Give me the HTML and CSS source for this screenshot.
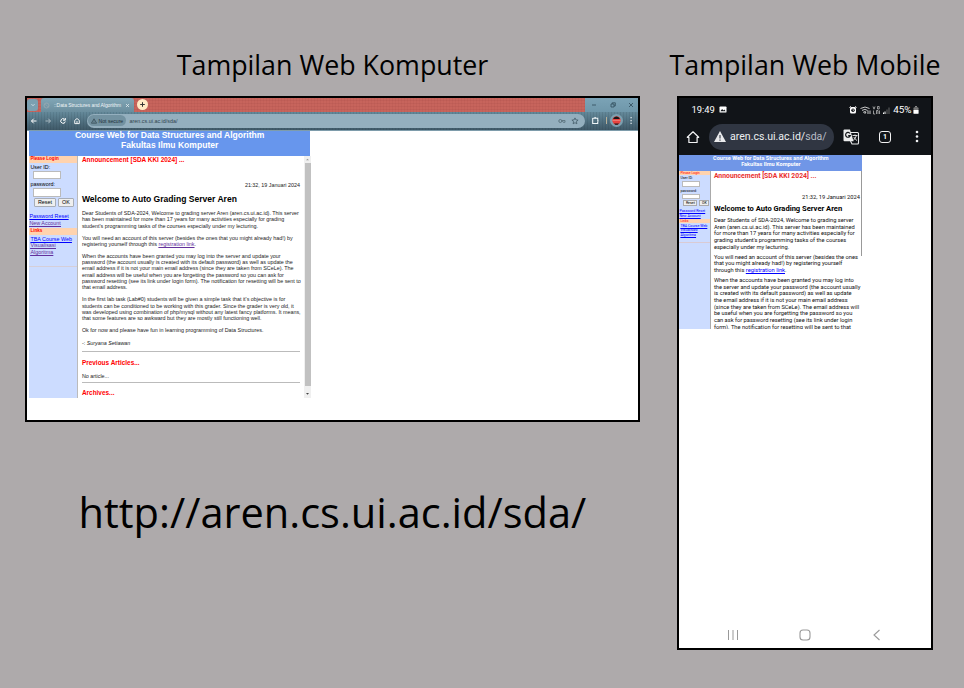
FILE: index.html
```html
<!DOCTYPE html>
<html lang="id">
<head>
<meta charset="utf-8">
<title>Tampilan Web</title>
<link rel="stylesheet" href="styles.css">
</head>
<body>
<main class="board">
  <section class="left">
    <h1 class="caption">Tampilan Web Komputer</h1>
    <div class="desktop">
      <div class="tabs">
        <span class="tab-search"><svg width="8" height="8" viewBox="0 0 8 8"><path d="M2.500 3.200 4 4.700 5.500 3.200" fill="none" stroke="#e6eef2" stroke-width=".8"/></svg></span>
        <div class="tab">
          <svg width="7" height="7" viewBox="0 0 7 7"><circle cx="3.500" cy="3.500" r="2.500" fill="none" stroke="#9aa9b1" stroke-width=".8"/><path d="M1 3q2-1 2.500.5T6 4" fill="none" stroke="#9aa9b1" stroke-width=".6"/></svg>
          <span class="tab-title">::Data Structures and Algorithm</span>
          <svg width="5" height="5" viewBox="0 0 5 5"><path d="m1 1 3 3M4 1 1 4" stroke="#e2ebef" stroke-width=".8"/></svg>
        </div>
        <span class="new-tab"><svg width="7" height="7" viewBox="0 0 7 7"><path d="M3.500 1.200v4.600M1.200 3.500h4.600" stroke="#333" stroke-width="1"/></svg></span>
        <div class="win">
          <svg width="8" height="8" viewBox="0 0 8 8"><path d="M2 4h4" stroke="#304b5b" stroke-width=".8"/></svg>
          <svg width="8" height="8" viewBox="0 0 8 8"><path d="M2 3h3v3H2zM3.200 3V1.800h3.100v3.100H5" fill="none" stroke="#304b5b" stroke-width=".8"/></svg>
          <svg width="8" height="8" viewBox="0 0 8 8"><path d="m2 2 4 4M6 2 2 6" stroke="#304b5b" stroke-width=".8"/></svg>
        </div>
      </div>
      <div class="toolbar">
        <svg class="nav" viewBox="0 0 8 8"><path d="M6.500 4h-5M3.700 1.700 1.500 4l2.200 2.300" fill="none" stroke="#fff" stroke-width="1"/></svg>
        <svg class="nav dim" viewBox="0 0 8 8"><path d="M1.500 4h5M4.300 1.700 6.500 4 4.300 6.300" fill="none" stroke="#fff" stroke-width="1"/></svg>
        <svg class="nav" viewBox="0 0 8 8"><path d="M6.300 4.500A2.300 2.300 0 1 1 5.600 2.300M6.300 1v2.200H4" fill="none" stroke="#fff" stroke-width="1"/></svg>
        <svg class="nav" viewBox="0 0 8 8"><path d="M1.700 3.400 4 1.500l2.300 1.900v3.200H1.700zM4 4v2.500" fill="none" stroke="#fff" stroke-width=".9"/></svg>
        <div class="omnibox">
          <span class="chip"><svg width="6" height="6" viewBox="0 0 6 6"><path d="M3 .8 5.600 5.200H.4zM3 2.400v1.200M3 4.100v.5" fill="none" stroke="#263840" stroke-width=".6"/></svg>Not secure</span>
          <span class="addr">aren.cs.ui.ac.id/sda/</span>
          <svg class="key" width="8" height="6" viewBox="0 0 8 6"><circle cx="2.300" cy="3" r="1.500" fill="none" stroke="#5c747f" stroke-width="1"/><path d="M4 2.500h3v1.800H5.200z" fill="none" stroke="#5c747f" stroke-width=".9"/></svg>
          <svg width="8" height="8" viewBox="0 0 8 8"><path d="m4 .9.9 2 2.200.2-1.700 1.500.5 2.200L4 5.700 2.100 6.800l.5-2.200L.9 3.100l2.200-.2z" fill="none" stroke="#445c68" stroke-width=".8"/></svg>
        </div>
        <svg class="ext" width="9" height="9" viewBox="0 0 9 9"><path d="M1.700 2.200h5v1.500M1.700 2v5.500h5V6" fill="none" stroke="#eef4f6" stroke-width="1.100"/><path d="M6.200 3.800v2h1.300v-2z" fill="#eef4f6"/><path d="M3.300 1.200h1.800v1H3.300z" fill="#eef4f6"/></svg>
        <span class="bar"></span>
        <span class="avatar"><svg width="9" height="9" viewBox="0 0 9 9"><circle cx="4.500" cy="4.500" r="4.200" fill="#e8433f"/><path d="M1.200 2.200Q4.500-1 7.800 2.200L7.300 3H1.700zM2 7.500h5L5.700 8.700H3.300z" fill="#151719"/><path d="M.5 4.500h8" stroke="#f5aaa1" stroke-width=".5"/></svg></span>
        <svg width="4" height="9" viewBox="0 0 4 9"><path d="M1.500 1h1.200v1.300H1.500zM1.500 4h1.200v1.200H1.500zM1.500 6.700h1.200V8H1.500z" fill="#e7eef1"/></svg>
      </div>
      <div class="site">
        <header class="site-head"><b class="h1">Course Web for Data Structures and Algorithm</b><b class="h2">Fakultas Ilmu Komputer</b></header>
        <div class="site-body">
          <aside class="side">
            <div class="label">Please Login</div>
            <div class="field-label">User ID:</div><div class="input"></div>
            <div class="field-label second">password:</div><div class="input"></div>
            <div class="buttons"><span class="btn">Reset</span><span class="btn">OK</span></div>
            <div class="links"><a>Password Reset</a><a class="seen">New Account</a></div>
            <div class="label">Links</div>
            <div class="links more"><a>TBA Course Web</a><a class="seen">Visualisasi</a><a class="seen">Algoritma</a></div>
            <div class="side-line"></div>
          </aside>
          <article class="article">
            <h2 class="red">Announcement [SDA KKI 2024] ...</h2>
            <div class="date">21:32, 19 Januari 2024</div>
            <h3 class="title">Welcome to Auto Grading Server Aren</h3>
            <p>Dear Students of SDA-2024, Welcome to grading server Aren (aren.cs.ui.ac.id). This server<br>has been maintained for more than 17 years for many activities especially for grading<br>student's programming tasks of the courses especially under my lecturing.</p>
            <p>You will need an account of this server (besides the ones that you might already had!) by<br>registering yourself through this <a class="seen">registration link</a>.</p>
            <p>When the accounts have been granted you may log into the server and update your<br>password (the account usually is created with its default password) as well as update the<br>email address if it is not your main email address (since they are taken from SCeLe). The<br>email address will be useful when you are forgetting the password so you can ask for<br>password resetting (see its link under login form). The notification for resetting will be sent to<br>that email address.</p>
            <p>In the first lab task (Lab#0) students will be given a simple task that it's objective is for<br>students can be conditioned to be working with this grader. Since the grader is very old, it<br>was developed using combination of php/mysql without any latest fancy platforms. It means,<br>that some features are so awkward but they are mostly still functioning well.</p>
            <p>Ok for now and please have fun in learning programming of Data Structures.</p>
            <p class="sign">-: <i>Suryana Setiawan</i></p>
            <div class="rule"></div>
            <h2 class="red prev">Previous Articles...</h2>
            <p class="none">No article...</p>
            <div class="rule"></div>
            <h2 class="red arch">Archives...</h2>
          </article>
          <div class="scroll"><svg width="7" height="7" viewBox="0 0 7 7"><path d="M2 4.300h3L3.500 2.700z" fill="#999"/></svg><span class="thumb"></span><svg width="7" height="12" viewBox="0 0 7 12"><path d="M2 7h3L3.500 8.700z" fill="#444"/></svg></div>
        </div>
      </div>
    </div>
    <div class="url">http://aren.cs.ui.ac.id/sda/</div>
  </section>
  <section class="right">
    <h1 class="caption">Tampilan Web Mobile</h1>
    <div class="phone">
      <div class="status">
        <span class="clock">19:49</span>
        <svg width="8" height="7" viewBox="0 0 9 8"><rect x=".5" y=".5" width="8" height="7" rx="1" fill="#fff"/><path d="M1.500 6 3.500 3.500 5 5l1-1 1.500 2z" fill="#111418"/></svg>
        <svg class="status-icons" width="42" height="10" viewBox="0 0 42 10"><rect x="1" y="2" width="6" height="6.500" rx="1.500" fill="#fff"/><circle cx="4" cy="5.200" r="1.700" fill="#111418"/><path d="M4 4v1.300h1" stroke="#fff" stroke-width=".6" fill="none"/><path d="m.5 2.500 1.500-1M7.500 2.500 6 1.500" stroke="#fff"/><path d="M11.500 3.500q4.500-3 9 0M13 5.400q3-2 5.500 0M14.500 7q1.300-.8 2.500 0L16 8.500zM19 5.500V9M21 5.500V9" stroke="#ddd" stroke-width=".9" fill="none"/><path d="m24 1.500 1 2.700 1-2.700M28.500 1.500h1.700v2.500h-1.700zM24.500 5.500V9h1.700M27.500 9V5.500H29V9M30.500 5.500V9" stroke="#ccc" stroke-width=".7" fill="none"/><path d="M34.500 9V7.500M36 9V6.500" stroke="#fff" stroke-width="1"/><path d="M38 9V4.500M40 9V2.500" stroke="#666" stroke-width="1"/></svg>
        <span class="pct">45%</span>
        <svg width="6" height="8" viewBox="0 0 6 8"><path d="M2 0h2v1.300H2z" fill="#888"/><rect x=".5" y="1.200" width="5" height="6.500" rx="1" fill="#777"/><path d="M.5 4h5v3.700h-5z" fill="#fff"/></svg>
      </div>
      <div class="mbar">
        <svg width="14" height="14" viewBox="0 0 14 14"><path d="M1.300 7.300 7 1.800l5.700 5.500h-1.600v5.200H2.900V7.300z" fill="none" stroke="#f2f3f4" stroke-width="1.200" stroke-linejoin="round"/></svg>
        <div class="maddr"><svg width="12" height="11" viewBox="0 0 12 11"><path d="M6 0 12 11H0z" fill="#e9eaec"/><path d="M6 4v3.500M6 8.500v1.200" stroke="#303642" stroke-width="1.100"/></svg><span>aren.cs.ui.ac.id/<span class="path">sda/</span></span></div>
        <svg class="translate" width="17" height="16" viewBox="0 0 17 16"><path d="M7 3.500h7.500q1 0 1 1v9.500q0 1-1 1H9L7.500 12" fill="none" stroke="#e8e9ea" stroke-width="1.100"/><path d="M1.500.5H7l3.500 11.800h-9q-1 0-1-1V1.500q0-1 1-1z" fill="#eceded"/><path d="M7 4.500A2.400 2.400 0 1 0 7.300 6.600H5.200" fill="none" stroke="#111418" stroke-width="1.200"/><path d="M9.500 6.500h5M12 5.500v1M13.500 6.500q-.7 2.500-3.300 5M10.800 8q1.300 2.500 3.200 3.500" fill="none" stroke="#eee" stroke-width=".9"/></svg>
        <span class="count">1</span>
        <svg class="kebab" width="4" height="13" viewBox="0 0 4 13"><g fill="#f0f1f2"><circle cx="2" cy="2" r="1.300"/><circle cx="2" cy="6.500" r="1.300"/><circle cx="2" cy="11" r="1.300"/></g></svg>
      </div>
      <div class="msite">
        <header class="mhead"><b>Course Web for Data Structures and Algorithm</b><b>Fakultas Ilmu Komputer</b></header>
        <div class="mbody">
          <aside class="mside">
            <div class="mlabel">Please Login</div>
            <div class="mfield">User ID:</div><div class="minput"></div>
            <div class="mfield second">password:</div><div class="minput"></div>
            <div class="mbuttons"><span>Reset</span><span>OK</span></div>
            <div class="mlinks"><a>Password Reset</a><a>New Account</a></div>
            <div class="mlabel">Links</div>
            <div class="mlinks more"><a>TBA Course Web</a><a>Visualisasi</a><a>Algoritma</a></div>
            <div class="mline"></div>
          </aside>
          <article class="marticle">
            <h2 class="mred">Announcement [SDA KKI 2024] ...</h2>
            <div class="mdate">21:32, 19 Januari 2024</div>
            <h3 class="mtitle">Welcome to Auto Grading Server Aren</h3>
            <p>Dear Students of SDA-2024, Welcome to grading server<br>Aren (aren.cs.ui.ac.id). This server has been maintained<br>for more than 17 years for many activities especially for<br>grading student's programming tasks of the courses<br>especially under my lecturing.</p>
            <p>You will need an account of this server (besides the ones<br>that you might already had!) by registering yourself<br>through this <a>registration link</a>.</p>
            <p>When the accounts have been granted you may log into<br>the server and update your password (the account usually<br>is created with its default password) as well as update<br>the email address if it is not your main email address<br>(since they are taken from SCeLe). The email address will<br>be useful when you are forgetting the password so you<br>can ask for password resetting (see its link under login<br>form). The notification for resetting will be sent to that</p>
          </article>
          <span class="mscroll"></span>
        </div>
      </div>
      <div class="mnav">
        <svg width="12" height="12" viewBox="0 0 12 12"><path d="M1.500 1v10M6 1v10M10.500 1v10" stroke="#999" stroke-width="1"/></svg>
        <svg width="12" height="12" viewBox="0 0 12 12"><rect x="1" y="1" width="10" height="10" rx="3" fill="none" stroke="#999" stroke-width="1.100"/></svg>
        <svg width="12" height="12" viewBox="0 0 12 12"><path d="M8.500 1 3 6l5.500 5" fill="none" stroke="#999" stroke-width="1.100"/></svg>
      </div>
    </div>
  </section>
</main>
</body>
</html>
```
FILE: styles.css
```css
*{box-sizing:border-box}
body{margin:0;background:#aeaaab;color:#000;font-family:"Liberation Sans",Arial,sans-serif}
svg{display:block;flex:none}
h1,h2,h3,p{margin:0}
.board{display:flex;width:964px;height:688px;overflow:hidden}
.left{width:615px;margin-left:25px;padding-top:46px}
.right{width:256px;margin-left:37px;padding-top:46px}
.caption{font:400 26.800px/38px "Open Sans","Noto Sans",sans-serif;height:50px;white-space:nowrap;display:flex;justify-content:center}
.url{font:400 41.550px/60px "Open Sans","Noto Sans",sans-serif;white-space:nowrap;margin:60px 0 0 53.500px}

.desktop{width:615px;height:326px;border:2px solid #000;background:#fff;overflow:hidden}
.tabs{height:14px;display:flex;align-items:stretch;background:repeating-linear-gradient(90deg,transparent 0 2px,rgba(130,45,40,.07) 2px 3px),repeating-linear-gradient(#c7645c 0 2px,#c05f58 2px 3px)}
.tab-search{width:11px;height:12px;margin:1px 1px 0 0;display:grid;place-items:center;background:#7ba0b1;border-radius:3px}
.tab{width:93px;margin-left:2px;padding:0 4px 0 2px;display:flex;align-items:center;justify-content:space-between;background:linear-gradient(#82a7b7,#6a8d9d);border-radius:3px 3px 0 0}
.tab-title{font-size:5px;letter-spacing:-.08px;color:#eef4f6;white-space:nowrap}
.new-tab{width:11px;height:11px;margin:1px 0 0 3px;border-radius:50%;background:#ffe9c4;display:grid;place-items:center}
.win{margin-left:auto;width:53px;display:flex;justify-content:space-between;align-items:center;background:linear-gradient(#7ba3b6,#6f97aa);padding:0 3px 0 5px}
.toolbar{height:18.500px;display:flex;align-items:center;padding-left:3px;background:repeating-linear-gradient(90deg,transparent 0 2px,rgba(20,40,50,.1) 2px 3px),linear-gradient(#64899a,#3f5968);border-bottom:1px solid #7e9cab}
.nav{width:8px;height:8px;margin-right:6.400px}
.dim{opacity:.5}
.omnibox{width:498px;height:14px;border-radius:7px;background:#94afbe;display:flex;align-items:center;font-size:5.400px;color:#31454f;padding-right:6px;margin-left:-1px}
.chip{width:38px;height:11px;border-radius:6px;background:#7392a1;margin-left:1px;padding-left:3px;display:flex;align-items:center;gap:2px;white-space:nowrap;color:#1d3038;font-size:5.100px}
.addr{margin-left:4px;white-space:nowrap}
.key{margin:0 5px 0 auto}
.ext{margin-left:6px}
.bar{width:1px;height:7px;background:#b7b09a;margin:0 3px 0 6px}
.avatar{width:13px;height:13px;border-radius:50%;background:#7ca0b0;display:grid;place-items:center;margin-right:6px}

.site{width:284px;padding-left:2.400px}
.site-head{width:280.500px;height:25.500px;background:#6796ed;color:#fff;text-align:center;display:flex;flex-direction:column;align-items:center;white-space:nowrap}
.h1,.h2{font-size:8.550px;line-height:10px}
.h1{margin-top:-.5px}
.site-body{display:flex;height:242px;overflow:hidden}
.side{width:48.500px;background:#ccdcff;border-right:1px solid #bbb;font-size:5.400px;white-space:nowrap;flex:none}
.label{height:6.500px;background:#ffd3ae;color:#f00;font:700 4.600px/6.500px "Liberation Sans",sans-serif;padding-left:1px}
.field-label{height:8px;line-height:8.500px;padding-left:1px}
.second{margin-top:1px}
.input{width:27.500px;height:8.500px;background:#fff;border:1px solid #bbb;margin-left:4px}
.buttons{display:flex;gap:2px;margin:1.500px 0 0 4.500px;height:9px}
.btn{padding:0 3px;background:#efefef;border:1px solid #a8adb6;font-size:5.400px;line-height:7px;border-radius:1px}
.links{display:flex;flex-direction:column;align-items:flex-start;color:#00f;text-decoration:underline;height:21px;padding-top:6px;line-height:6.600px;font-size:5.400px}
.links.more{padding:1px 0 0 1px;height:27px;line-height:6.800px}
.seen{color:#63309b;text-decoration:underline}
.side-line{height:1px;background:#d6cfd8;margin-top:4px}
.article{width:218px;margin-left:4px;font-size:5.390px;line-height:6.350px;color:#222;white-space:nowrap;flex:none}
.article p{margin-bottom:5.500px}
.red{color:#f00;font:700 6.450px/8px "Liberation Sans",sans-serif;height:25px}
.date{text-align:right;height:8px;line-height:8px}
.title{font:700 8.550px/12px "Liberation Sans",sans-serif;color:#000;height:21px;padding-top:4px}
.article .sign{margin:6.500px 0 5px}
.rule{height:1px;background:#bbb}
.prev{height:20px;padding-top:6.500px}
.article .none{margin:1px 0 2.500px}
.arch{padding-top:6px;height:16px}
.scroll{width:7px;margin-left:4.500px;background:#f0f0f0;display:flex;flex-direction:column;flex:none}
.thumb{flex:1;background:#c1c1c1;width:6px;margin:0 auto}

.phone{width:256px;height:554px;border:2px solid #000;background:#fff;display:flex;flex-direction:column;overflow:hidden}
.status{height:23px;background:#111418;color:#fff;display:flex;align-items:center;padding:0 12px 0 12.500px;font:400 9.400px/20px Roboto,sans-serif;flex:none}
.clock{margin-right:4px}
.status-icons{margin-left:auto}
.pct{margin:0 1.500px 0 2px;font-size:9.900px}
.mbar{height:33.500px;background:#111418;display:flex;align-items:center;padding:0 0 2px 7px;flex:none}
.maddr{width:125px;height:26px;border-radius:13px;background:#303642;margin-left:9px;padding-left:5px;display:flex;align-items:center;gap:4px;color:#eceef0;font:400 10.550px/14px Roboto,sans-serif;white-space:nowrap}
.path{color:#b8bdc7}
.translate{margin-left:9px}
.count{width:12px;height:12px;border:1.200px solid #f2f2f2;border-radius:3px;color:#fff;margin-left:19px;font:700 7px/10px Roboto,sans-serif;text-align:center}
.kebab{margin-left:23.500px}
.msite{width:183px;margin-left:.4px;height:174px;overflow:hidden;flex:none;font-family:Roboto,sans-serif}
.mhead{height:16.500px;background:#7096e7;color:#fff;display:flex;flex-direction:column;align-items:center;font-size:5.550px;line-height:6.500px;white-space:nowrap}
.mbody{display:flex;height:158px}
.mside{width:32px;border-right:1px solid #aaa;background:#ccdcff;font-size:3.600px;white-space:nowrap;flex:none}
.mlabel{height:4px;background:#ffd3ae;color:#f00;font-size:3.400px;line-height:4px;padding-left:1px}
.mfield{height:6px;line-height:6.500px;padding-left:1px}
.minput{width:18px;height:5.500px;background:#fff;border:.5px solid #bbb;margin-left:3px}
.mbuttons{display:flex;gap:2px;margin:1px 0 0 4px;height:6px}
.mbuttons span{background:#eee;border:1px solid #aaa;line-height:4px;padding:0 1.500px}
.mlinks{height:12.500px;padding-top:3px;line-height:4.600px;color:#00f;text-decoration:underline;text-decoration-thickness:.5px;display:flex;flex-direction:column;align-items:flex-start}
.mlinks.more{height:18px;padding:1px 0 0 1px;line-height:4.600px}
.mline{height:1px;background:#dacbd3;margin-top:1px}
.marticle{width:146px;margin-left:2.500px;font-size:5.720px;line-height:6.650px;white-space:nowrap;color:#111;flex:none}
.marticle p{margin-bottom:3.400px}
.marticle a{color:#00f;text-decoration:underline}
.mred{color:#e92f2f;font:700 6.830px/9px Roboto,sans-serif;height:22px;padding-top:.5px}
.mdate{text-align:right;height:8px;line-height:8px}
.mtitle{font:700 7.550px/10px Roboto,sans-serif;color:#000;height:16px;padding-top:3px}
.mscroll{width:1px;height:85px;background:#999;margin-left:1px}
.mnav{margin-top:auto;height:27px;display:flex;justify-content:space-between;align-items:center;padding:0 48px}
```
